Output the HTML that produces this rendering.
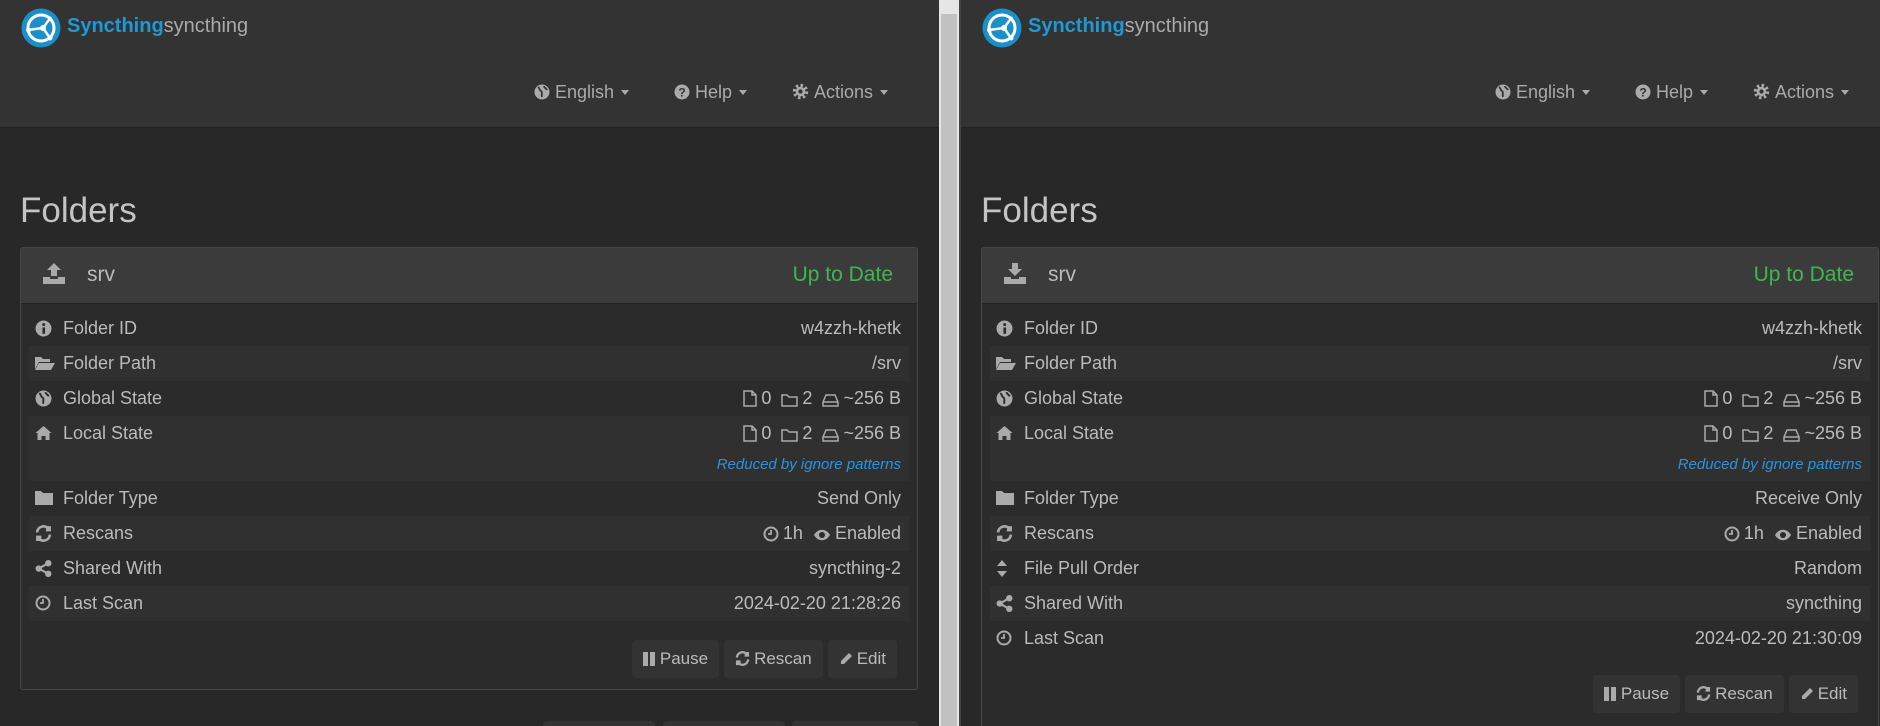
<!DOCTYPE html>
<html><head><meta charset="utf-8">
<style>
*{box-sizing:border-box;margin:0;padding:0}
body{width:1880px;height:726px;overflow:hidden;background:#222;font-family:"Liberation Sans",sans-serif;color:#bbb;position:relative}
.pane{position:absolute;top:0;height:726px;width:939px;overflow:hidden;background:#282828}
.nav{position:absolute;left:0;top:0;width:100%;height:128px;background:#333;border-bottom:1px solid #222}
.logo{position:absolute;left:21px;top:8px}
.brand{position:absolute;left:67px;top:15px;font-size:20px;white-space:nowrap}
.brand b{color:#1d9ad6}
.brand span{color:#aaa}
.menu{position:absolute;top:82px;font-size:18px;color:#aaa;white-space:nowrap}
.menu svg{vertical-align:-2px;margin-right:5px}
.caret{display:inline-block;border-left:4px solid transparent;border-right:4px solid transparent;border-top:5px solid #aaa;vertical-align:3px;margin-left:7px}
h1{position:absolute;left:20px;top:191px;font-size:35px;font-weight:normal;color:#c4c4c4}
.panel{position:absolute;left:20px;top:247px;width:898px;height:443px;background:#2b2b2b;border:1px solid #464646;border-radius:3px}
.ph{position:absolute;left:0;top:0;width:100%;height:56px;background:#3b3b3b;border-bottom:1px solid #222}
.ph .nm{position:absolute;left:66px;top:15px;font-size:21px;color:#bbb}
.ph .st{position:absolute;right:24px;top:15px;font-size:21px;color:#3cb84f}
.ph svg{position:absolute;left:22px;top:14px}
.row{position:absolute;left:8px;width:880px;height:35px;font-size:18px;line-height:35px}
.row.e{background:#303030}
.row .l{position:absolute;left:34px}
.row .ic{position:absolute;left:6px;top:9px}
.row .v{position:absolute;right:8px;white-space:nowrap}
.row .v svg{vertical-align:-3px;margin:0 4px 0 10px}
.red{position:absolute;right:8px;top:40px;font-size:15px;font-style:italic;color:#2a93e0;line-height:18px}
.btns{position:absolute;right:20px;top:392px;display:flex;gap:5px}
.btn{height:38px;background:#333;border-radius:4px;font-size:17px;line-height:38px;padding:0 11px;color:#bbb;white-space:nowrap}
.btn svg{vertical-align:-2px;margin-right:4px}
.scroll{position:absolute;left:939px;top:0;width:20px;height:726px;background:#e6e6e6}
.scroll .t{position:absolute;left:2px;top:14px;width:16px;height:712px;background:#c1c1c1}
.sep{position:absolute;left:959px;top:0;width:2px;height:726px;background:#444}
.ghost{position:absolute;top:721px;height:20px;background:#333;border-radius:4px}
</style></head><body>

<div class="pane" style="left:0">
  <div class="nav">
    <svg class="logo" width="40" height="40" viewBox="0 0 40 40"><circle cx="20" cy="20" r="19.5" fill="#1a8fc9"/><circle cx="20" cy="20" r="13" fill="none" stroke="#fff" stroke-width="3"/><path d="M7 22 L22 20 L30 9 M22 20 L29 30" stroke="#fff" stroke-width="2.5" fill="none"/><circle cx="22" cy="20" r="3" fill="#fff"/><circle cx="7.5" cy="22" r="2.5" fill="#fff"/><circle cx="29" cy="30" r="2.5" fill="#fff"/></svg>
    <div class="brand"><b>Syncthing</b><span>syncthing</span></div>
    <div class="menu" style="left:534px"><svg width="16" height="16" viewBox="0 0 16 16"><circle cx="8" cy="8" r="7.5" fill="#aaa"/><path d="M4 3c2 1 1 3 3 4s0 4 1 6M10 2c0 2 2 2 3 4" stroke="#333" stroke-width="1.8" fill="none"/></svg>English<span class="caret"></span></div>
    <div class="menu" style="left:674px"><svg width="16" height="16" viewBox="0 0 16 16"><circle cx="8" cy="8" r="7.5" fill="#aaa"/><text x="8" y="12.5" font-size="12" font-weight="bold" text-anchor="middle" fill="#333" font-family="Liberation Sans">?</text></svg>Help<span class="caret"></span></div>
    <div class="menu" style="left:792px"><svg width="17" height="17" viewBox="0 0 16 16"><circle cx="8" cy="8" r="5.5" fill="none" stroke="#aaa" stroke-width="3.5" stroke-dasharray="2.2 2.1"/><circle cx="8" cy="8" r="4.5" fill="#aaa"/><circle cx="8" cy="8" r="2" fill="#333"/></svg>Actions<span class="caret"></span></div>
  </div>
  <h1>Folders</h1>
  <div class="panel">
    <div class="ph"><svg width="22" height="22" viewBox="0 0 22 22" fill="#aaa"><path d="M11 1 L4 8 H8 V14 H14 V8 H18 Z"/><path d="M0 15 H7 V17 H15 V15 H22 V22 H0 Z"/></svg><div class="nm">srv</div><div class="st">Up to Date</div></div>
    <div class="row" style="top:63px"><svg class="ic" width="17" height="17" viewBox="0 0 16 16"><circle cx="8" cy="8" r="7.5" fill="#aaa"/><rect x="7" y="7" width="2.5" height="6" fill="#2b2b2b"/><circle cx="8.2" cy="4.3" r="1.4" fill="#2b2b2b"/></svg><span class="l">Folder ID</span><span class="v">w4zzh-khetk</span></div>
    <div class="row e" style="top:98px"><svg class="ic" width="20" height="16" viewBox="0 0 20 16" fill="#aaa"><path d="M0 2h6l2 2h7v3H4L0 14z"/><path d="M4 8h16l-4 7H0z"/></svg><span class="l">Folder Path</span><span class="v">/srv</span></div>
    <div class="row" style="top:133px"><svg class="ic" width="17" height="17" viewBox="0 0 16 16"><circle cx="8" cy="8" r="7.5" fill="#aaa"/><path d="M4 3c2 1 1 3 3 4s0 4 1 6M10 2c0 2 2 2 3 4" stroke="#2b2b2b" stroke-width="1.8" fill="none"/></svg><span class="l">Global State</span><span class="v"><svg width="14" height="17" viewBox="0 0 14 17"><path d="M1 1h8l4 4v11H1z M9 1v4h4" fill="none" stroke="#aaa" stroke-width="1.5"/></svg>0<svg width="17" height="14" viewBox="0 0 17 14"><path d="M1 2h5l2 2h8v9H1z" fill="none" stroke="#aaa" stroke-width="1.5"/></svg>2<svg width="17" height="14" viewBox="0 0 17 14"><path d="M1 9l3-7h9l3 7v4H1z M1 9h15" fill="none" stroke="#aaa" stroke-width="1.5"/></svg>~256 B</span></div>
    <div class="row e" style="top:168px;height:65px"><svg class="ic" width="17" height="16" viewBox="0 0 16 16" fill="#aaa"><path d="M8 1L0 8h2v7h4v-4h4v4h4V8h2z"/></svg><span class="l">Local State</span><span class="v"><svg width="14" height="17" viewBox="0 0 14 17"><path d="M1 1h8l4 4v11H1z M9 1v4h4" fill="none" stroke="#aaa" stroke-width="1.5"/></svg>0<svg width="17" height="14" viewBox="0 0 17 14"><path d="M1 2h5l2 2h8v9H1z" fill="none" stroke="#aaa" stroke-width="1.5"/></svg>2<svg width="17" height="14" viewBox="0 0 17 14"><path d="M1 9l3-7h9l3 7v4H1z M1 9h15" fill="none" stroke="#aaa" stroke-width="1.5"/></svg>~256 B</span><span class="red">Reduced by ignore patterns</span></div>
    <div class="row" style="top:233px"><svg class="ic" width="18" height="15" viewBox="0 0 18 15" fill="#aaa"><path d="M0 1h6l2 2h10v12H0z"/></svg><span class="l">Folder Type</span><span class="v">Send Only</span></div>
    <div class="row e" style="top:268px"><svg class="ic" width="17" height="17" viewBox="0 0 16 16"><path d="M2 7a6 6 0 0 1 11-3M14 9a6 6 0 0 1-11 3" stroke="#aaa" stroke-width="2.5" fill="none"/><path d="M11 1h4v5h-5zM1 10h5v5H1z" fill="#aaa"/></svg><span class="l">Rescans</span><span class="v"><svg width="16" height="16" viewBox="0 0 16 16"><circle cx="8" cy="8" r="6.5" fill="none" stroke="#aaa" stroke-width="2"/><path d="M8 4v4H5" stroke="#aaa" stroke-width="1.8" fill="none"/></svg>1h<svg width="18" height="14" viewBox="0 0 18 14"><path d="M1 7c4-7 12-7 16 0c-4 7-12 7-16 0z" fill="#aaa"/><circle cx="9" cy="7" r="3" fill="#2b2b2b"/></svg>Enabled</span></div>
    <div class="row" style="top:303px"><svg class="ic" width="17" height="17" viewBox="0 0 16 16" fill="#aaa"><circle cx="3.5" cy="8" r="3"/><circle cx="12.5" cy="3" r="3"/><circle cx="12.5" cy="13" r="3"/><path d="M3.5 8L12.5 3M3.5 8l9 5" stroke="#aaa" stroke-width="2"/></svg><span class="l">Shared With</span><span class="v">syncthing-2</span></div>
    <div class="row e" style="top:338px"><svg class="ic" width="16" height="16" viewBox="0 0 16 16"><circle cx="8" cy="8" r="6.5" fill="none" stroke="#aaa" stroke-width="2"/><path d="M8 4v4H5" stroke="#aaa" stroke-width="1.8" fill="none"/></svg><span class="l">Last Scan</span><span class="v">2024-02-20 21:28:26</span></div>
    <div class="btns">
      <div class="btn"><svg width="13" height="14" viewBox="0 0 13 14" fill="#aaa"><rect x="0" y="0" width="5" height="14"/><rect x="7" y="0" width="5" height="14"/></svg>Pause</div>
      <div class="btn"><svg width="15" height="15" viewBox="0 0 16 16"><path d="M2 7a6 6 0 0 1 11-3M14 9a6 6 0 0 1-11 3" stroke="#aaa" stroke-width="2.5" fill="none"/><path d="M11 1h4v5h-5zM1 10h5v5H1z" fill="#aaa"/></svg>Rescan</div>
      <div class="btn"><svg width="14" height="14" viewBox="0 0 14 14" fill="#aaa"><path d="M10 1l3 3-8 8H2V9z"/></svg>Edit</div>
    </div>
  </div>
  <div class="ghost" style="left:543px;width:112px"></div>
  <div class="ghost" style="left:663px;width:122px"></div>
  <div class="ghost" style="left:792px;width:126px"></div>
</div>

<div class="scroll"><div class="t"></div></div>
<div class="sep"></div>

<div class="pane" style="left:961px;width:919px">
  <div class="nav">
    <svg class="logo" width="40" height="40" viewBox="0 0 40 40"><circle cx="20" cy="20" r="19.5" fill="#1a8fc9"/><circle cx="20" cy="20" r="13" fill="none" stroke="#fff" stroke-width="3"/><path d="M7 22 L22 20 L30 9 M22 20 L29 30" stroke="#fff" stroke-width="2.5" fill="none"/><circle cx="22" cy="20" r="3" fill="#fff"/><circle cx="7.5" cy="22" r="2.5" fill="#fff"/><circle cx="29" cy="30" r="2.5" fill="#fff"/></svg>
    <div class="brand"><b>Syncthing</b><span>syncthing</span></div>
    <div class="menu" style="left:534px"><svg width="16" height="16" viewBox="0 0 16 16"><circle cx="8" cy="8" r="7.5" fill="#aaa"/><path d="M4 3c2 1 1 3 3 4s0 4 1 6M10 2c0 2 2 2 3 4" stroke="#333" stroke-width="1.8" fill="none"/></svg>English<span class="caret"></span></div>
    <div class="menu" style="left:674px"><svg width="16" height="16" viewBox="0 0 16 16"><circle cx="8" cy="8" r="7.5" fill="#aaa"/><text x="8" y="12.5" font-size="12" font-weight="bold" text-anchor="middle" fill="#333" font-family="Liberation Sans">?</text></svg>Help<span class="caret"></span></div>
    <div class="menu" style="left:792px"><svg width="17" height="17" viewBox="0 0 16 16"><circle cx="8" cy="8" r="5.5" fill="none" stroke="#aaa" stroke-width="3.5" stroke-dasharray="2.2 2.1"/><circle cx="8" cy="8" r="4.5" fill="#aaa"/><circle cx="8" cy="8" r="2" fill="#333"/></svg>Actions<span class="caret"></span></div>
  </div>
  <h1>Folders</h1>
  <div class="panel" style="height:500px">
    <div class="ph"><svg width="22" height="22" viewBox="0 0 22 22" fill="#aaa"><path d="M11 14 L4 7 H8 V1 H14 V7 H18 Z"/><path d="M0 15 H7 V17 H15 V15 H22 V22 H0 Z"/></svg><div class="nm">srv</div><div class="st">Up to Date</div></div>
    <div class="row" style="top:63px"><svg class="ic" width="17" height="17" viewBox="0 0 16 16"><circle cx="8" cy="8" r="7.5" fill="#aaa"/><rect x="7" y="7" width="2.5" height="6" fill="#2b2b2b"/><circle cx="8.2" cy="4.3" r="1.4" fill="#2b2b2b"/></svg><span class="l">Folder ID</span><span class="v">w4zzh-khetk</span></div>
    <div class="row e" style="top:98px"><svg class="ic" width="20" height="16" viewBox="0 0 20 16" fill="#aaa"><path d="M0 2h6l2 2h7v3H4L0 14z"/><path d="M4 8h16l-4 7H0z"/></svg><span class="l">Folder Path</span><span class="v">/srv</span></div>
    <div class="row" style="top:133px"><svg class="ic" width="17" height="17" viewBox="0 0 16 16"><circle cx="8" cy="8" r="7.5" fill="#aaa"/><path d="M4 3c2 1 1 3 3 4s0 4 1 6M10 2c0 2 2 2 3 4" stroke="#2b2b2b" stroke-width="1.8" fill="none"/></svg><span class="l">Global State</span><span class="v"><svg width="14" height="17" viewBox="0 0 14 17"><path d="M1 1h8l4 4v11H1z M9 1v4h4" fill="none" stroke="#aaa" stroke-width="1.5"/></svg>0<svg width="17" height="14" viewBox="0 0 17 14"><path d="M1 2h5l2 2h8v9H1z" fill="none" stroke="#aaa" stroke-width="1.5"/></svg>2<svg width="17" height="14" viewBox="0 0 17 14"><path d="M1 9l3-7h9l3 7v4H1z M1 9h15" fill="none" stroke="#aaa" stroke-width="1.5"/></svg>~256 B</span></div>
    <div class="row e" style="top:168px;height:65px"><svg class="ic" width="17" height="16" viewBox="0 0 16 16" fill="#aaa"><path d="M8 1L0 8h2v7h4v-4h4v4h4V8h2z"/></svg><span class="l">Local State</span><span class="v"><svg width="14" height="17" viewBox="0 0 14 17"><path d="M1 1h8l4 4v11H1z M9 1v4h4" fill="none" stroke="#aaa" stroke-width="1.5"/></svg>0<svg width="17" height="14" viewBox="0 0 17 14"><path d="M1 2h5l2 2h8v9H1z" fill="none" stroke="#aaa" stroke-width="1.5"/></svg>2<svg width="17" height="14" viewBox="0 0 17 14"><path d="M1 9l3-7h9l3 7v4H1z M1 9h15" fill="none" stroke="#aaa" stroke-width="1.5"/></svg>~256 B</span><span class="red">Reduced by ignore patterns</span></div>
    <div class="row" style="top:233px"><svg class="ic" width="18" height="15" viewBox="0 0 18 15" fill="#aaa"><path d="M0 1h6l2 2h10v12H0z"/></svg><span class="l">Folder Type</span><span class="v">Receive Only</span></div>
    <div class="row e" style="top:268px"><svg class="ic" width="17" height="17" viewBox="0 0 16 16"><path d="M2 7a6 6 0 0 1 11-3M14 9a6 6 0 0 1-11 3" stroke="#aaa" stroke-width="2.5" fill="none"/><path d="M11 1h4v5h-5zM1 10h5v5H1z" fill="#aaa"/></svg><span class="l">Rescans</span><span class="v"><svg width="16" height="16" viewBox="0 0 16 16"><circle cx="8" cy="8" r="6.5" fill="none" stroke="#aaa" stroke-width="2"/><path d="M8 4v4H5" stroke="#aaa" stroke-width="1.8" fill="none"/></svg>1h<svg width="18" height="14" viewBox="0 0 18 14"><path d="M1 7c4-7 12-7 16 0c-4 7-12 7-16 0z" fill="#aaa"/><circle cx="9" cy="7" r="3" fill="#2b2b2b"/></svg>Enabled</span></div>
    <div class="row" style="top:303px"><svg class="ic" width="12" height="17" viewBox="0 0 12 17" fill="#aaa"><path d="M6 0l5 6H1zM6 17l5-6H1z"/></svg><span class="l">File Pull Order</span><span class="v">Random</span></div>
    <div class="row e" style="top:338px"><svg class="ic" width="17" height="17" viewBox="0 0 16 16" fill="#aaa"><circle cx="3.5" cy="8" r="3"/><circle cx="12.5" cy="3" r="3"/><circle cx="12.5" cy="13" r="3"/><path d="M3.5 8L12.5 3M3.5 8l9 5" stroke="#aaa" stroke-width="2"/></svg><span class="l">Shared With</span><span class="v">syncthing</span></div>
    <div class="row" style="top:373px"><svg class="ic" width="16" height="16" viewBox="0 0 16 16"><circle cx="8" cy="8" r="6.5" fill="none" stroke="#aaa" stroke-width="2"/><path d="M8 4v4H5" stroke="#aaa" stroke-width="1.8" fill="none"/></svg><span class="l">Last Scan</span><span class="v">2024-02-20 21:30:09</span></div>
    <div class="btns" style="top:427px">
      <div class="btn"><svg width="13" height="14" viewBox="0 0 13 14" fill="#aaa"><rect x="0" y="0" width="5" height="14"/><rect x="7" y="0" width="5" height="14"/></svg>Pause</div>
      <div class="btn"><svg width="15" height="15" viewBox="0 0 16 16"><path d="M2 7a6 6 0 0 1 11-3M14 9a6 6 0 0 1-11 3" stroke="#aaa" stroke-width="2.5" fill="none"/><path d="M11 1h4v5h-5zM1 10h5v5H1z" fill="#aaa"/></svg>Rescan</div>
      <div class="btn"><svg width="14" height="14" viewBox="0 0 14 14" fill="#aaa"><path d="M10 1l3 3-8 8H2V9z"/></svg>Edit</div>
    </div>
  </div>
</div>
</body></html>
